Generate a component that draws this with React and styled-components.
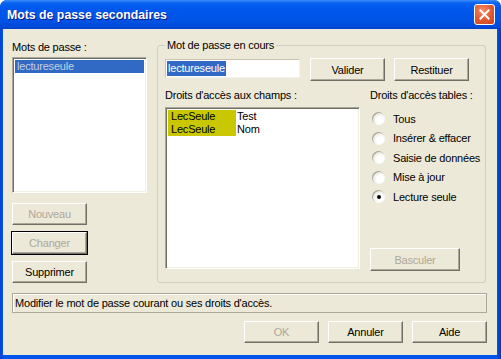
import React from "react";
import styled, { createGlobalStyle } from "styled-components";

const GlobalStyle = createGlobalStyle`
*{
    padding: 0;
    margin: 0;
    box-sizing: border-box;
}
body{
    background: #ffffff;
    font-family: "Liberation Sans", Arial, sans-serif;
    font-size: 11px;
    letter-spacing: -0.2px;
    color: #000;
}
`;

const Window = styled.div`
width: 501px;
height: 359px;
display: flex;
flex-direction: column;
background: #0055ea;
border-radius: 7px 7px 0 0;
overflow: hidden;
`;

const TitleBar = styled.div`
height: 29px;
flex: none;
display: flex;
align-items: center;
justify-content: space-between;
padding: 0 6px 0 7px;
background: linear-gradient(#3d8dfb 0px, #0a62f0 3px, #0058ee 8px, #0054e6 20px, #0049d8 27px, #003fc8 29px);
`;

const Title = styled.div`
color: #fff;
font-weight: bold;
font-size: 12.3px;
letter-spacing: 0;
text-shadow: 1px 1px 0 #0a1883;
`;

const CloseBtn = styled.div`
width: 21px;
height: 21px;
border: 1px solid #fff;
border-radius: 3px;
background: radial-gradient(circle at 40% 30%, #f28d6c, #e0582f 55%, #c8441f);
display: flex;
align-items: center;
justify-content: center;
`;

const Frame = styled.div`
flex: 1;
display: flex;
padding: 0 4px 4px 3px;
background: linear-gradient(90deg, #0842d0 0px, #0055ea 3px, #0055ea 497px, #0036b8 501px);
`;

const Body = styled.div`
flex: 1;
background: #ece9d8;
padding: 11px 10px 0 9px;
display: flex;
flex-direction: column;
`;

const MainRow = styled.div`
display: flex;
height: 243px;
`;

const LeftCol = styled.div`
width: 135px;
display: flex;
flex-direction: column;
`;

const Label = styled.div`
line-height: 13px;
margin-top: ${p => p.top || 0}px;
white-space: nowrap;
`;

const Sunken = styled.div`
background: #fff;
border-style: solid;
border-width: 1px;
border-color: #aca899 #fff #fff #aca899;
box-shadow: inset 1px 1px 0 #716f64, inset -1px -1px 0 #f1efe2;
width: ${p => p.w}px;
height: ${p => p.h}px;
margin-top: ${p => p.top || 0}px;
padding: 2px;
`;

const SelectedItem = styled.div`
background: #316ac5;
color: #c4cde0;
line-height: 13px;
padding-left: 2px;
`;

const Button = styled.div`
width: ${p => p.w || 75}px;
height: ${p => p.h || 22}px;
margin-top: ${p => p.top || 0}px;
margin-left: ${p => p.left || 0}px;
background: #ece9d8;
border-style: solid;
border-width: 1px;
border-color: #fff #716f64 #716f64 #fff;
box-shadow: inset -1px -1px 0 #aca899;
display: flex;
align-items: center;
justify-content: center;
color: ${p => (p.disabled ? "#aca899" : "#000")};
outline: ${p => (p.$default ? "1px solid #000" : "none")};
flex: none;
`;

const Group = styled.div`
position: relative;
width: 329px;
margin-left: 10px;
margin-top: 5px;
height: 238px;
border: 1px solid #d0d0bf;
border-radius: 3px;
padding: 12px 0 0 7px;
`;

const Caption = styled.div`
position: absolute;
top: -7px;
left: 7px;
background: #ece9d8;
padding: 0 2px;
line-height: 13px;
`;

const TopRow = styled.div`
display: flex;
align-items: flex-start;
`;

const TextInput = styled.div`
width: 135px;
height: 19px;
margin-top: 1px;
background: #fff;
border: 1px solid #c8c4b4;
border-right-color: #f4f2ea;
border-bottom-color: #f4f2ea;
padding: 1px 1px;
display: flex;
`;

const InputSel = styled.span`
background: #316ac5;
color: #fff;
line-height: 14px;
padding: 0 1px;
`;

const Columns = styled.div`
display: flex;
margin-top: 8px;
`;

const FieldCol = styled.div`
width: 195px;
display: flex;
flex-direction: column;
`;

const FieldRow = styled.div`
display: flex;
line-height: 13px;
`;

const FieldRight = styled.div`
width: 68px;
background: #c9c700;
padding-left: 3px;
`;

const FieldName = styled.div`
padding-left: 1px;
`;

const TableCol = styled.div`
margin-left: 10px;
display: flex;
flex-direction: column;
`;

const RadioList = styled.div`
display: flex;
flex-direction: column;
gap: 6.5px;
margin-top: 10px;
padding-left: 2px;
`;

const RadioRow = styled.div`
display: flex;
align-items: center;
gap: 8px;
height: 13px;
`;

const RadioDot = styled.div`
width: 13px;
height: 13px;
border-radius: 50%;
background: radial-gradient(circle at 65% 65%, #fff 30%, #e6e4da 70%, #cdcab9);
box-shadow: inset 1px 1px 0 #aca899, 0 0 0 0.5px #f0eee4;
display: flex;
align-items: center;
justify-content: center;
&::after{
    content: "";
    width: 4px;
    height: 4px;
    border-radius: 50%;
    background: ${p => (p.on ? "#000" : "transparent")};
}
`;

const StatusBar = styled.div`
height: 20px;
margin-top: 10px;
border: 1px solid #aca899;
box-shadow: inset 1px 1px 0 #fff;
padding-left: 2px;
display: flex;
align-items: center;
white-space: nowrap;
`;

const BottomRow = styled.div`
display: flex;
justify-content: flex-end;
gap: 9px;
margin-top: 8px;
`;

const champs = [
    { droit: "LecSeule", nom: "Test" },
    { droit: "LecSeule", nom: "Nom" },
];

const tables = ["Tous", "Insérer & effacer", "Saisie de données", "Mise à jour", "Lecture seule"];

export default function App() {
    return (
        <>
            <GlobalStyle />
            <Window>
                <TitleBar>
                    <Title>Mots de passe secondaires</Title>
                    <CloseBtn>
                        <svg width="11" height="11" viewBox="0 0 11 11">
                            <path d="M1.5 1.5 L9.5 9.5 M9.5 1.5 L1.5 9.5" stroke="#fff" strokeWidth="2" strokeLinecap="square" />
                        </svg>
                    </CloseBtn>
                </TitleBar>
                <Frame>
                    <Body>
                        <MainRow>
                            <LeftCol>
                                <Label top={1}>Mots de passe :</Label>
                                <Sunken w={135} h={136} top={3}>
                                    <SelectedItem>lectureseule</SelectedItem>
                                </Sunken>
                                <Button top={10} disabled>Nouveau</Button>
                                <Button top={7} disabled $default>Changer</Button>
                                <Button top={7}>Supprimer</Button>
                            </LeftCol>
                            <Group>
                                <Caption>Mot de passe en cours</Caption>
                                <TopRow>
                                    <TextInput><InputSel>lectureseule</InputSel></TextInput>
                                    <Button left={10} h={23}>Valider</Button>
                                    <Button left={9} h={23}>Restituer</Button>
                                </TopRow>
                                <Columns>
                                    <FieldCol>
                                        <Label>Droits d'accès aux champs :</Label>
                                        <Sunken w={195} h={162} top={5}>
                                            {champs.map((c, i) => (
                                                <FieldRow key={i}>
                                                    <FieldRight>{c.droit}</FieldRight>
                                                    <FieldName>{c.nom}</FieldName>
                                                </FieldRow>
                                            ))}
                                        </Sunken>
                                    </FieldCol>
                                    <TableCol>
                                        <Label>Droits d'accès tables :</Label>
                                        <RadioList>
                                            {tables.map((t, i) => (
                                                <RadioRow key={t}>
                                                    <RadioDot on={i === 4} />
                                                    <span>{t}</span>
                                                </RadioRow>
                                            ))}
                                        </RadioList>
                                        <Button w={90} h={23} top={45} disabled>Basculer</Button>
                                    </TableCol>
                                </Columns>
                            </Group>
                        </MainRow>
                        <StatusBar>Modifier le mot de passe courant ou ses droits d'accès.</StatusBar>
                        <BottomRow>
                            <Button disabled>OK</Button>
                            <Button>Annuler</Button>
                            <Button>Aide</Button>
                        </BottomRow>
                    </Body>
                </Frame>
            </Window>
        </>
    );
}
